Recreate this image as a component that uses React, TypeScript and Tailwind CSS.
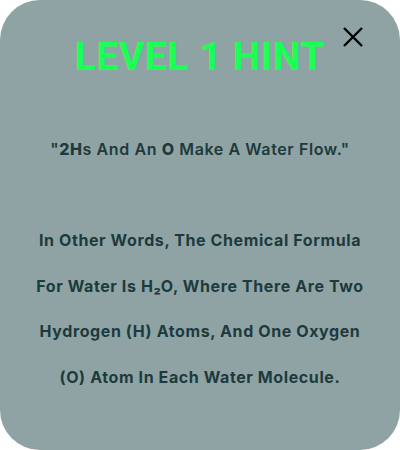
import React from "react";

export default function App() {
  return (
    <div className="w-[400px] h-[450px] bg-white">
      <div className="relative w-[400px] h-[450px] rounded-[40px] bg-[#8fa3a4] flex flex-col items-center">
        <button className="absolute left-[343px] top-[27px] w-[20px] h-[20px]">
          <svg width="20" height="20" viewBox="0 0 20 20">
            <path d="M1 1 L19 19 M19 1 L1 19" stroke="#000" strokeWidth="2.4" fill="none" />
          </svg>
        </button>
        <h1
          className="mt-[34px] text-[39px] leading-[46px] font-bold tracking-[0.6px] text-[#1cff55]"
          style={{ fontFamily: 'Roboto, sans-serif' }}
        >
          LEVEL 1 HINT
        </h1>
        <div
          className="w-full text-center text-[#1d3a3d] text-[16px] font-bold tracking-[0.6px]"
          style={{ fontFamily: 'Inter, sans-serif' }}
        >
          <p className="mt-[57px] leading-[24px] font-semibold">
            "<span className="font-extrabold">2H</span>s And An <span className="font-extrabold">O</span> Make A Water Flow."
          </p>
          <p className="mt-[57px] leading-[45.7px]">
            In Other Words, The Chemical Formula
            <br />
            For Water Is H₂O, Where There Are Two
            <br />
            Hydrogen (H) Atoms, And One Oxygen
            <br />
            (O) Atom In Each Water Molecule.
          </p>
        </div>
      </div>
    </div>
  );
}
